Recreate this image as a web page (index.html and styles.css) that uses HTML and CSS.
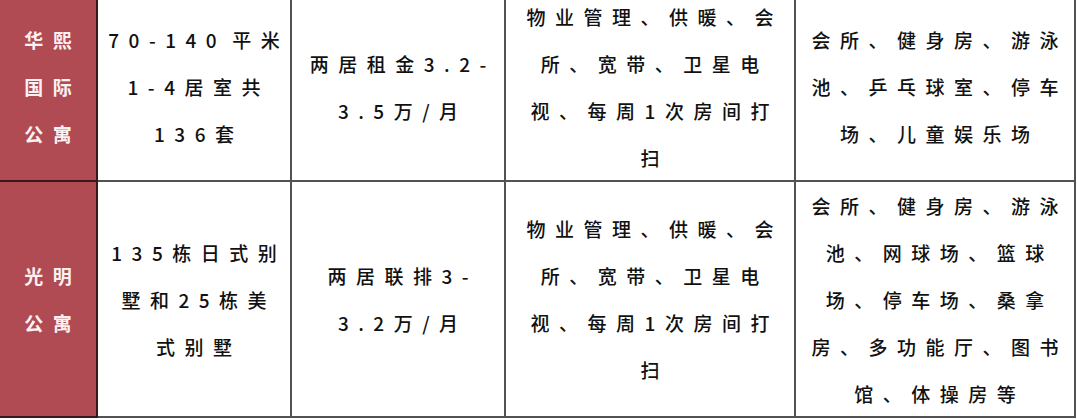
FILE: index.html
```html
<!DOCTYPE html>
<html lang="zh-CN">
<head>
<meta charset="utf-8">
<title>公寓对比</title>
<link rel="stylesheet" href="styles.css">
</head>
<body>
<div class="grid">
  <div class="cell head"><p class="txt">华熙<br>国际<br>公寓</p></div>
  <div class="cell"><p class="txt">70-140<span class="gap"></span>平米<br>1-4居室共<br>136套</p></div>
  <div class="cell"><p class="txt">两居租金3.2-<br>3.5万/月</p></div>
  <div class="cell"><p class="txt">物业管理、供暖、会<br>所、宽带、卫星电<br>视、每周1次房间打<br>扫</p></div>
  <div class="cell"><p class="txt">会所、健身房、游泳<br>池、乒乓球室、停车<br>场、儿童娱乐场</p></div>

  <div class="cell head"><p class="txt">光明<br>公寓</p></div>
  <div class="cell"><p class="txt">135栋日式别<br>墅和25栋美<br>式别墅</p></div>
  <div class="cell"><p class="txt">两居联排3-<br>3.2万/月</p></div>
  <div class="cell"><p class="txt">物业管理、供暖、会<br>所、宽带、卫星电<br>视、每周1次房间打<br>扫</p></div>
  <div class="cell"><p class="txt">会所、健身房、游泳<br>池、网球场、篮球<br>场、停车场、桑拿<br>房、多功能厅、图书<br>馆、体操房等</p></div>
</div>
</body>
</html>
```

FILE: styles.css
```css
html, body {
  margin: 0;
  padding: 0;
  background: #ffffff;
  overflow: hidden;
}

.grid {
  display: grid;
  grid-template-columns: 98px 194px 214px 290px 280px;
  grid-template-rows: 189px 236px;
  margin-top: -7px;
  width: 1076px;
  font-family: "Noto Sans CJK SC", "Noto Sans", sans-serif;
  font-size: 19px;
  font-weight: 500;
  letter-spacing: 9.5px;
  line-height: 47px;
  color: #111111;
}

.cell {
  box-sizing: border-box;
  border-right: 2px solid rgba(0, 0, 0, 0.68);
  border-bottom: 2px solid rgba(0, 0, 0, 0.68);
  display: flex;
  align-items: center;
  justify-content: center;
  padding-left: 9.5px;
}

.txt {
  margin: 0;
  text-align: center;
  white-space: nowrap;
}

.gap {
  display: inline-block;
  width: 6px;
}

.head {
  background: #b04a53;
  color: #fbf1f2;
  font-weight: 700;
}
```
